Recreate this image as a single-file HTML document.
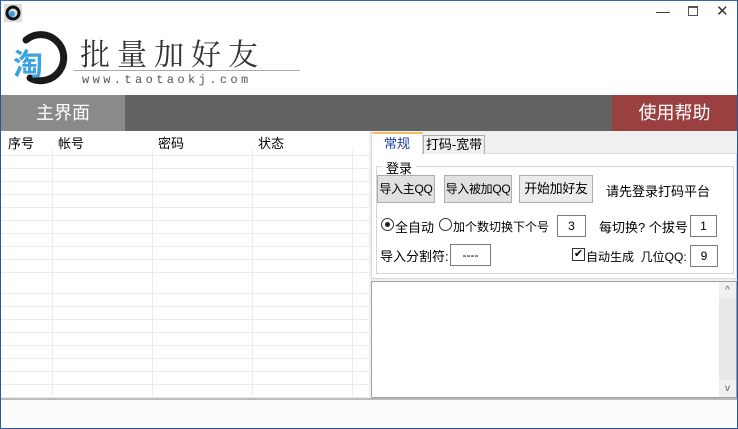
<!DOCTYPE html>
<html><head><meta charset="utf-8"><style>
*{margin:0;padding:0;box-sizing:border-box}
body{width:738px;height:429px;overflow:hidden;background:#fff;font-family:"Liberation Sans","Noto Sans CJK SC",sans-serif;font-size:12px;color:#000;position:relative}
.a{position:absolute;white-space:nowrap}
.btn{position:absolute;border:1px solid #adadad;background:#e1e1e1;height:28px;line-height:26px;text-align:center;font-size:12px;white-space:nowrap;letter-spacing:-0.3px}
.inp{position:absolute;border:1px solid #7a7a7a;background:#fff;height:22px;line-height:20px;text-align:center;font-size:12px}
</style></head><body>
<div class="a" style="left:0;top:0;width:738px;height:429px;border:1px solid #2b579a;border-top-color:#3a64a8"></div>
<svg class="a" style="left:4px;top:4px" width="18" height="18" viewBox="0 0 18 18"><rect width="18" height="18" fill="#ddd"/><circle cx="9" cy="9" r="6" fill="none" stroke="#111" stroke-width="3"/><circle cx="8" cy="10" r="3" fill="#3aa0dd"/></svg>
<div class="a" style="left:656px;top:3px;font-size:14px;color:#333">—</div>
<div class="a" style="left:688px;top:6px;width:10px;height:10px;border:1px solid #555;border-top-width:2px"></div>
<div class="a" style="left:716px;top:2px;font-size:15px;color:#333">✕</div>
<svg class="a" style="left:0;top:0" width="80" height="95" viewBox="0 0 80 95"><path d="M26 40 A23 23 0 1 1 30 78" fill="none" stroke="#1a1a1a" stroke-width="7" stroke-linecap="round"/></svg>
<div class="a" style="left:13px;top:40px;font-size:30px;color:#3ba3e0;font-weight:bold;font-family:'Noto Sans CJK SC',sans-serif">淘</div>
<div class="a" style="left:80px;top:30px;font-size:30px;color:#333;letter-spacing:7px;font-family:'Noto Serif CJK SC',serif">批量加好友</div>
<div class="a" style="left:74px;top:70px;width:226px;height:1px;background:#aaa"></div>
<div class="a" style="left:82px;top:73px;font-size:12px;color:#555;letter-spacing:3.4px;font-family:'Liberation Mono',monospace">www.taotaokj.com</div>
<div class="a" style="left:1px;top:95px;width:736px;height:36px;background:#636363"></div>
<div class="a" style="left:1px;top:95px;width:124px;height:36px;background:#8a8a8a;color:#fff;font-size:18px;line-height:36px;text-align:center">主界面</div>
<div class="a" style="left:612px;top:95px;width:125px;height:36px;background:#9a4041;color:#fff;font-size:18px;line-height:36px;text-align:center">使用帮助</div>
<div class="a" style="left:1px;top:131px;width:368px;height:268px;background:#fff;background-image:repeating-linear-gradient(to bottom,transparent 0,transparent 12px,#ececec 12px,#ececec 13px);background-position:0 150px"></div>
<div class="a" style="left:1px;top:131px;width:368px;height:19px;background:#fff"></div>
<div class="a" style="left:52px;top:150px;width:1px;height:248px;background:#ececec"></div>
<div class="a" style="left:152px;top:150px;width:1px;height:248px;background:#ececec"></div>
<div class="a" style="left:252px;top:150px;width:1px;height:248px;background:#ececec"></div>
<div class="a" style="left:352px;top:150px;width:1px;height:248px;background:#ececec"></div>
<div class="a" style="left:8px;top:133px;font-size:13px">序号</div>
<div class="a" style="left:58px;top:133px;font-size:13px">帐号</div>
<div class="a" style="left:158px;top:133px;font-size:13px">密码</div>
<div class="a" style="left:258px;top:133px;font-size:13px">状态</div>
<div class="a" style="left:369px;top:131px;width:368px;height:268px;background:#f0f0f0"></div>
<div class="a" style="left:371px;top:153px;width:366px;height:126px;border:1px solid #d9d9d9;background:#fff"></div>
<div class="a" style="left:371px;top:132px;width:52px;height:22px;background:#fff;border:1px solid #d9d9d9;border-bottom:none;border-top:2px solid #f0c060;color:#1a3ea0;text-align:center;line-height:20px;font-size:13px">常规</div>
<div class="a" style="left:423px;top:135px;width:62px;height:19px;background:#f0f0f0;border:1px solid #adadad;border-bottom:none;text-align:center;line-height:18px;font-size:13px">打码-宽带</div>
<div class="a" style="left:376px;top:166px;width:358px;height:108px;border:1px solid #d5d5d5"></div>
<div class="a" style="left:382px;top:158px;background:#fff;padding:0 4px;font-size:13px">登录</div>
<div class="btn" style="left:377px;top:175px;width:58px">导入主QQ</div>
<div class="btn" style="left:444px;top:175px;width:68px">导入被加QQ</div>
<div class="btn" style="left:519px;top:175px;width:74px;background:#ececec;font-size:13px">开始加好友</div>
<div class="a" style="left:606px;top:181px;font-size:13px">请先登录打码平台</div>
<div class="a" style="left:381px;top:218px;width:13px;height:13px;border:1px solid #333;border-radius:50%;background:#fff"><div class="a" style="left:3px;top:3px;width:5px;height:5px;border-radius:50%;background:#222"></div></div>
<div class="a" style="left:395px;top:217px;font-size:13px">全自动</div>
<div class="a" style="left:439px;top:218px;width:13px;height:13px;border:1px solid #333;border-radius:50%;background:#fff"></div>
<div class="a" style="left:453px;top:218px;font-size:12px">加个数切换下个号</div>
<div class="inp" style="left:557px;top:215px;width:29px">3</div>
<div class="a" style="left:599px;top:217px;font-size:13px">每切换? 个拔号</div>
<div class="inp" style="left:690px;top:215px;width:27px">1</div>
<div class="a" style="left:380px;top:246px;font-size:13px">导入分割符:</div>
<div class="inp" style="left:450px;top:244px;width:41px">----</div>
<div class="a" style="left:572px;top:248px;width:13px;height:13px;border:1px solid #333;background:#fff;font-size:11px;line-height:11px;text-align:center">✔</div>
<div class="a" style="left:586px;top:248px;font-size:12px">自动生成&nbsp; 几位QQ:</div>
<div class="inp" style="left:690px;top:245px;width:28px">9</div>
<div class="a" style="left:371px;top:281px;width:366px;height:117px;border:1px solid #a0a0a0;background:#fff"></div>
<div class="a" style="left:719px;top:282px;width:17px;height:115px;background:#e8e8e8"></div>
<div class="a" style="left:719px;top:282px;width:17px;height:17px;background:#f0f0f0;font-size:10px;color:#606060;text-align:center;line-height:17px">^</div>
<div class="a" style="left:719px;top:380px;width:17px;height:17px;background:#f0f0f0;font-size:10px;color:#606060;text-align:center;line-height:17px">v</div>
<div class="a" style="left:1px;top:398px;width:736px;height:2px;background:#bbb"></div>
<div class="a" style="left:1px;top:400px;width:736px;height:28px;background:#fbfdfd"></div>
</body></html>
